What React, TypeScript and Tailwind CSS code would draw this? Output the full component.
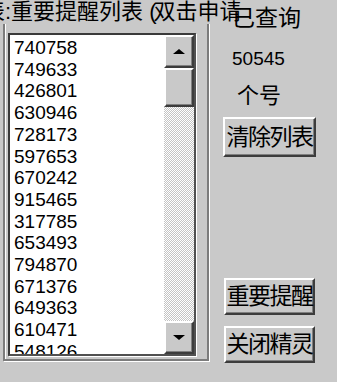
const numbers = [
  "740758", "749633", "426801", "630946", "728173",
  "597653", "670242", "915465", "317785", "653493",
  "794870", "671376", "649363", "610471", "548126",
]

const font = "font-['Liberation_Sans','Noto_Sans_CJK_SC',sans-serif]"

function ScrollButton({ up, className = "" }: { up?: boolean; className?: string }) {
  return (
    <div className={`flex items-center justify-center bg-[#c9c9c9] border-2 border-t-white border-l-white border-r-[#3c3c3c] border-b-[#3c3c3c] shadow-[inset_-1px_-1px_0_#808080] ${className}`}>
      {up ? (
        <div className="w-0 h-0 border-l-[6px] border-r-[6px] border-b-[5px] border-l-transparent border-r-transparent border-b-black" />
      ) : (
        <div className="w-0 h-0 border-l-[6px] border-r-[6px] border-t-[5px] border-l-transparent border-r-transparent border-t-black" />
      )}
    </div>
  )
}

function Button({ label, className = "" }: { label: string; className?: string }) {
  return (
    <div className={`flex items-center justify-center bg-[#c9c9c9] border-2 border-t-white border-l-white border-r-[#3c3c3c] border-b-[#3c3c3c] shadow-[inset_-1px_-1px_0_#808080] text-[23px] leading-none tracking-[-1.5px] text-black ${className}`}>
      {label}
    </div>
  )
}

export default function App() {
  return (
    <div className={`relative w-[337px] h-[382px] overflow-hidden bg-[#c9c9c9] flex ${font}`}>
      {/* group box title */}
      <div className="absolute top-0 left-[-17px] h-[24px] pt-[1px] bg-[#c9c9c9] text-[22px] leading-none text-black whitespace-nowrap z-10">
        表:重要提醒列表 <span className="mr-[-3px]">(</span>双击申请
      </div>

      {/* left: list group */}
      <div className="w-[211px] shrink-0">
        <div className="ml-[3px] mt-[14px] w-[206px] h-[347px] pt-[19px] border-l-2 border-r-2 border-b-2 border-[#7c7c7c] shadow-[inset_1px_0_0_#fff,1px_1px_0_#fff]">
          <div className="ml-[3px] w-[188px] h-[323px] flex border-2 border-t-[#3a3a3a] border-l-[#3a3a3a] border-r-[#505050] border-b-[#505050] shadow-[1px_1px_0_#fff] bg-white">
            <div className="flex-1 overflow-hidden pt-[2px] pl-[4px] text-[19px] leading-[21.7px] text-black">
              {numbers.map((n) => (
                <div key={n}>{n}</div>
              ))}
            </div>
            <div className="w-[30px] flex flex-col">
              <ScrollButton up className="h-[33px]" />
              <div className="h-[39px] bg-[#c9c9c9] border-2 border-t-white border-l-white border-r-[#3c3c3c] border-b-[#3c3c3c] shadow-[inset_-1px_-1px_0_#808080]" />
              <div className="flex-1 bg-[conic-gradient(#ffffff_25%,#c4c4c4_0_50%,#ffffff_0_75%,#c4c4c4_0)] bg-[length:2px_2px]" />
              <ScrollButton className="h-[33px]" />
            </div>
          </div>
        </div>
      </div>

      {/* right panel */}
      <div className="flex-1 flex flex-col text-black">
        <div className="relative z-20 ml-[21px] mt-[7px] text-[23px] leading-none whitespace-nowrap">已查询</div>
        <div className="ml-[21px] mt-[18px] text-[19px] leading-[21px]">50545</div>
        <div className="ml-[26px] mt-[16px] text-[22px] leading-none">个号</div>
        <Button label="清除列表" className="ml-[12px] mt-[10px] w-[93px] h-[40px]" />
        <Button label="重要提醒" className="ml-[13px] mt-[121px] w-[91px] h-[37px]" />
        <Button label="关闭精灵" className="ml-[13px] mt-[11px] w-[91px] h-[37px]" />
      </div>
    </div>
  )
}
